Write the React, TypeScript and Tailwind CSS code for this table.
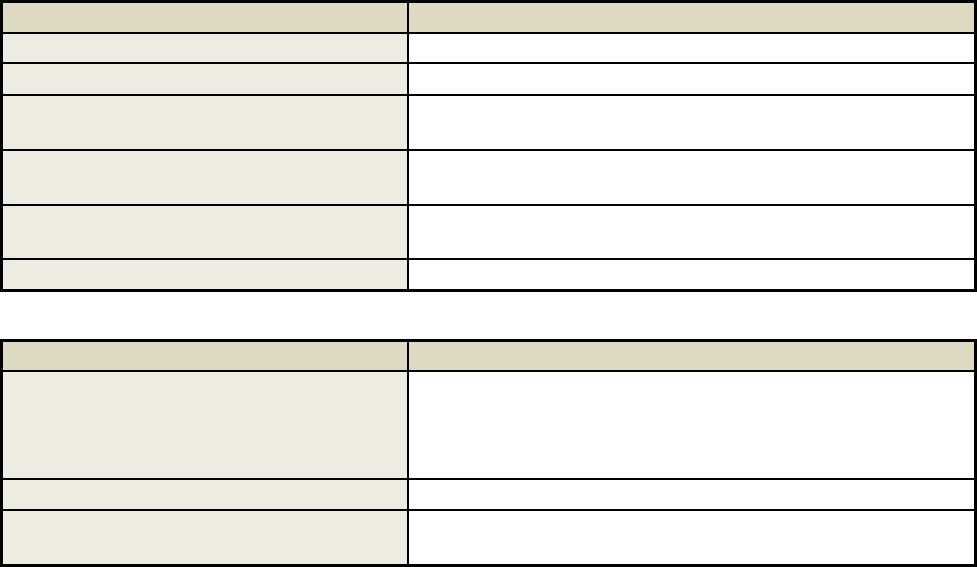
import React from "react";

type Row = { h: string; header?: boolean };

function Table({ rows }: { rows: Row[] }) {
  return (
    <div className="flex w-[977px] flex-col border-[3px] border-black bg-white">
      {rows.map((r, i) => (
        <div
          key={i}
          className={`flex ${r.h} ${i > 0 ? "border-t-2 border-black" : ""} ${
            r.header ? "bg-[#ddd9c3]" : ""
          }`}
        >
          <div
            className={`w-[406px] shrink-0 border-r-2 border-black ${
              r.header ? "bg-[#ddd9c3]" : "bg-[#eeece1]"
            }`}
          />
          <div className={`flex-1 ${r.header ? "bg-[#ddd9c3]" : "bg-white"}`} />
        </div>
      ))}
    </div>
  );
}

export default function App() {
  const t1: Row[] = [
    { h: "h-[29px]", header: true },
    { h: "h-[30px]" },
    { h: "h-[32px]" },
    { h: "h-[55px]" },
    { h: "h-[55px]" },
    { h: "h-[54px]" },
    { h: "h-[31px]" },
  ];
  const t2: Row[] = [
    { h: "h-[28px]", header: true },
    { h: "h-[108px]" },
    { h: "h-[31px]" },
    { h: "h-[55px]" },
  ];
  return (
    <div className="w-[977px] bg-white" style={{ fontFamily: "'Liberation Sans', sans-serif" }}>
      <Table rows={t1} />
      <div className="mt-[47px]">
        <Table rows={t2} />
      </div>
    </div>
  );
}
